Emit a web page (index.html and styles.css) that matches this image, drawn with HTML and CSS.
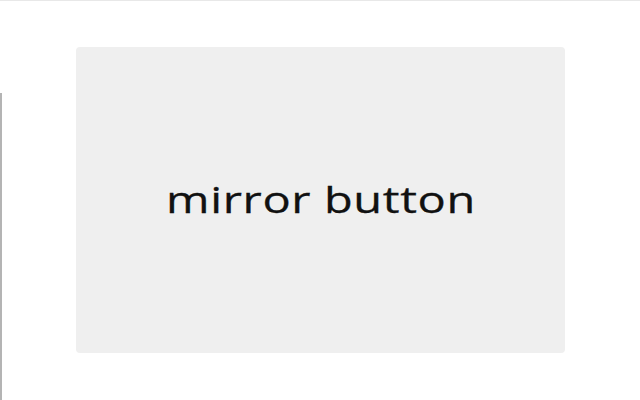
FILE: index.html
```html
<!DOCTYPE html>
<html>
<head>
<meta charset="utf-8">
<link rel="stylesheet" href="styles.css">
</head>
<body>
<div class="edge"></div>
<main class="stage">
  <button class="mirror"><span class="label">mirror button</span></button>
</main>
</body>
</html>
```
FILE: styles.css
```css
html, body {
  margin: 0;
  padding: 0;
  width: 640px;
  height: 400px;
  background: #ffffff;
  overflow: hidden;
}
body {
  border-top: 1px solid #e8e8e8;
  box-sizing: border-box;
}
.edge {
  position: absolute;
  left: 0;
  top: 93px;
  width: 2px;
  height: 307px;
  background: #b4b4b4;
}
.stage {
  padding: 46px 0 0 76px;
}
.mirror {
  display: flex;
  align-items: center;
  justify-content: center;
  width: 489px;
  height: 306px;
  border: none;
  border-radius: 4px;
  background: #efefef;
  color: #111111;
  font-family: "Open Sans", sans-serif;
  font-size: 37px;
  padding: 0 0 4px 0;
  margin: 0;
}
.label {
  display: inline-block;
  letter-spacing: 0.5px;
  transform: scaleX(1.27);
  -webkit-text-stroke: 0.3px #111111;
}
```
